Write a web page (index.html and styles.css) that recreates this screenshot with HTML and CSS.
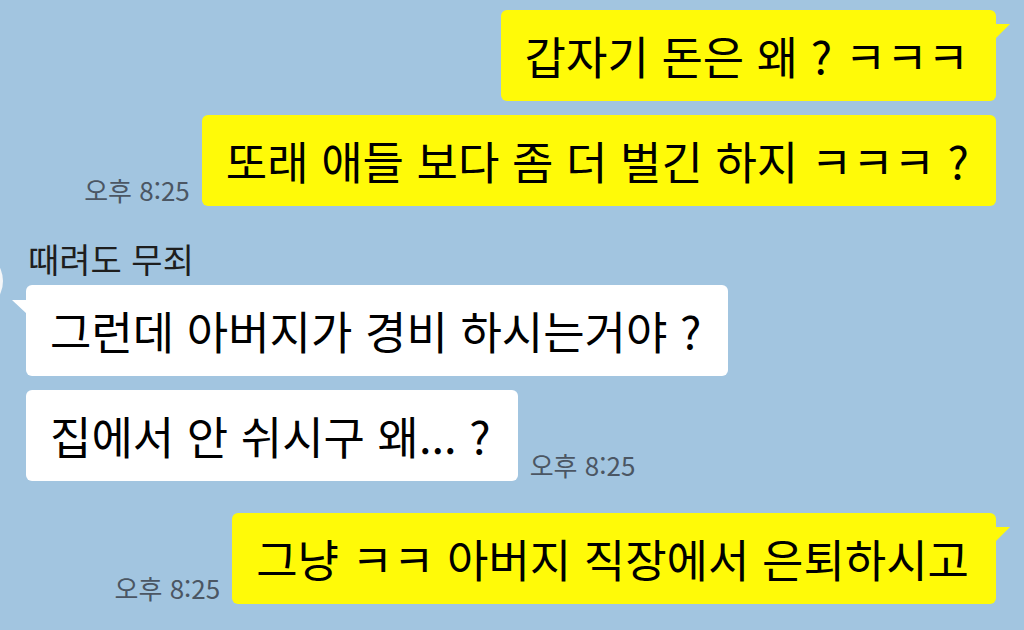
FILE: index.html
```html
<!DOCTYPE html>
<html lang="ko">
<head>
    <meta charset="UTF-8">
    <title>채팅</title>
    <link rel="stylesheet" href="styles.css">
</head>
<body>
    <div class="chat">
        <div class="row mine">
            <div class="bubble yellow tail">갑자기 돈은 왜 ? ㅋㅋㅋ</div>
        </div>
        <div class="row mine">
            <span class="time">오후 8:25</span>
            <div class="bubble yellow">또래 애들 보다 좀 더 벌긴 하지 ㅋㅋㅋ ?</div>
        </div>

        <div class="other">
            <span class="avatar"></span>
            <div class="name">때려도 무죄</div>
            <div class="row">
                <div class="bubble white tail">그런데 아버지가 경비 하시는거야 ?</div>
            </div>
            <div class="row">
                <div class="bubble white">집에서 안 쉬시구 왜... ?</div>
                <span class="time">오후 8:25</span>
            </div>
        </div>

        <div class="row mine last">
            <span class="time">오후 8:25</span>
            <div class="bubble yellow tail">그냥 ㅋㅋ 아버지 직장에서 은퇴하시고</div>
        </div>
    </div>
</body>
</html>
```

FILE: styles.css
```css
* {
    margin: 0;
    padding: 0;
    box-sizing: border-box;
}

body {
    width: 1024px;
    height: 630px;
    overflow: hidden;
    background: #a2c5e0;
    font-family: "Noto Sans CJK KR", "Noto Sans", sans-serif;
}

.chat {
    display: flex;
    flex-direction: column;
    gap: 14px;
    padding: 10px 28px 0 26px;
}

.row {
    display: flex;
    align-items: flex-end;
    gap: 12px;
}

.row.mine {
    justify-content: flex-end;
}

.row.last {
    margin-top: 18px;
}

.bubble {
    position: relative;
    height: 91px;
    padding: 0 27px 0 24px;
    border-radius: 6px;
    font-size: 45px;
    line-height: 91px;
    color: #000;
    white-space: nowrap;
}

.yellow {
    background: #fffa08;
}

.white {
    background: #ffffff;
}

/* little triangles at the top corner */
.mine .bubble.tail::after {
    content: "";
    position: absolute;
    top: 14px;
    right: -14px;
    border-left: 15px solid #fffa08;
    border-bottom: 15px solid transparent;
}

.other .bubble.tail::after {
    content: "";
    position: absolute;
    top: 15px;
    left: -14px;
    border-right: 15px solid #ffffff;
    border-bottom: 14px solid transparent;
}

.time {
    font-size: 26px;
    line-height: 32px;
    color: #4b5663;
    white-space: nowrap;
}

.other {
    position: relative;
    display: flex;
    flex-direction: column;
    gap: 14px;
    margin-top: 18px;
}

.other .name {
    font-size: 34px;
    line-height: 42px;
    color: #1e1e1e;
    margin: 0 0 -9px 2px;
}

.avatar {
    position: absolute;
    top: 12px;
    left: -85px;
    width: 62px;
    height: 62px;
    border-radius: 50%;
    background: #f4f6f8;
}
```
